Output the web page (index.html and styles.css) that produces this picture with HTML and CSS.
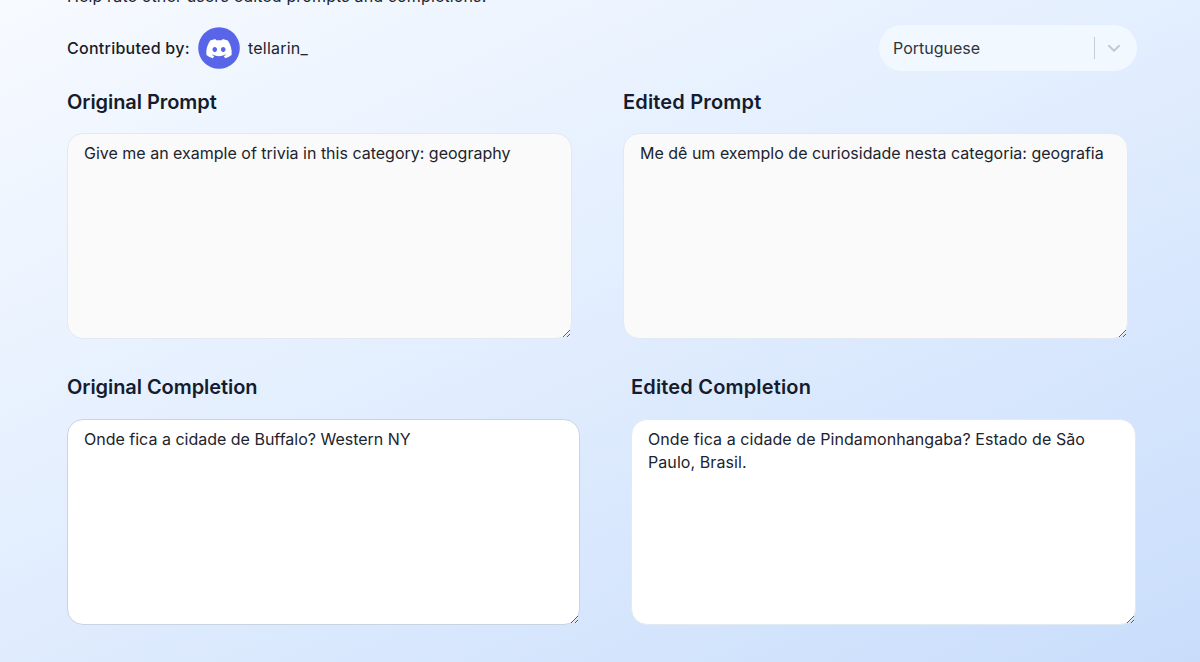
FILE: index.html
```
<!DOCTYPE html>
<html lang="en">
<head>
<meta charset="utf-8">
<title>Rate edited prompts</title>
<link rel="stylesheet" href="styles.css">
</head>
<body>
<main class="page">
  <p class="intro">Help rate other users edited prompts and completions.</p>
  <header class="toolbar">
    <div class="contributor">
      <span class="label">Contributed by:</span>
      <svg class="avatar" viewBox="0 0 42 42" aria-label="Discord">
        <circle cx="21" cy="21" r="20.8" fill="#5865e8"/>
        <g transform="translate(8.3 12) scale(.2)">
          <path fill="#fff" d="M107.7 8.07A105.15 105.15 0 0 0 81.47 0a72.06 72.06 0 0 0-3.36 6.83 97.68 97.68 0 0 0-29.11 0A72.37 72.37 0 0 0 45.64 0a105.89 105.89 0 0 0-26.25 8.09C2.79 32.65-1.71 56.6.54 80.21a105.73 105.73 0 0 0 32.17 16.15 77.7 77.7 0 0 0 6.89-11.11 68.42 68.42 0 0 1-10.85-5.18c.91-.66 1.8-1.34 2.66-2a75.57 75.57 0 0 0 64.32 0c.87.71 1.76 1.39 2.66 2a68.68 68.68 0 0 1-10.87 5.19 77 77 0 0 0 6.89 11.1 105.25 105.25 0 0 0 32.19-16.14c2.64-27.38-4.51-51.11-18.9-72.15ZM42.45 65.69C36.18 65.69 31 60 31 53s5-12.74 11.43-12.74S54 46 53.89 53s-5.05 12.69-11.44 12.69Zm42.24 0C78.41 65.69 73.25 60 73.25 53s5-12.74 11.44-12.74S96.23 46 96.12 53s-5.04 12.69-11.43 12.69Z"/>
        </g>
      </svg>
      <span class="username">tellarin_</span>
    </div>
    <div class="select">
      <span class="select-value">Portuguese</span>
      <span class="select-divider"></span>
      <svg class="chevron" viewBox="0 0 20 20"><path d="M4.9 7.8 10 12.7l5.1-4.9" fill="none" stroke="#c3c8ce" stroke-width="1.9" stroke-linecap="round" stroke-linejoin="round"/></svg>
    </div>
  </header>
  <section class="row prompts">
    <div class="field">
      <h2>Original Prompt</h2>
      <textarea class="box muted" spellcheck="false" readonly>Give me an example of trivia in this category: geography</textarea>
    </div>
    <div class="field edited">
      <h2>Edited Prompt</h2>
      <textarea class="box muted" spellcheck="false" readonly>Me dê um exemplo de curiosidade nesta categoria: geografia</textarea>
    </div>
  </section>
  <section class="row completions">
    <div class="field">
      <h2>Original Completion</h2>
      <textarea class="box outlined" spellcheck="false">Onde fica a cidade de Buffalo? Western NY</textarea>
    </div>
    <div class="field edited">
      <h2>Edited Completion</h2>
      <textarea class="box" spellcheck="false">Onde fica a cidade de Pindamonhangaba? Estado de São Paulo, Brasil.</textarea>
    </div>
  </section>
</main>
</body>
</html>
```
FILE: styles.css
```
* { box-sizing: border-box; }
body {
  margin: 0;
  height: 662px;
  overflow: hidden;
  font: 400 16px/23px Inter, sans-serif;
  color: #20242e;
  background: linear-gradient(155deg, #f7faff 0%, #e1edfe 50%, #c9ddfb 100%);
}
.page { padding: 0 63px 0 67px; }
.intro { margin: -15px 0 0; height: 40px; white-space: nowrap; letter-spacing: .14px; }
.toolbar { display: flex; justify-content: space-between; height: 46px; }
.contributor { display: flex; align-items: center; white-space: nowrap; }
.label { width: 131px; font-weight: 500; letter-spacing: .26px; color: #181c26; }
.avatar { width: 42px; height: 42px; margin-right: 8px; }
.username { letter-spacing: .22px; }
.select {
  display: flex;
  align-items: center;
  width: 258px;
  height: 46px;
  padding: 0 13px 0 14px;
  border-radius: 23px;
  background: #f1f8ff;
}
.select-value { flex: 1; color: #30343a; }
.select-divider { width: 1px; height: 22px; background: #c6cdd5; margin-right: 9px; }
.chevron { width: 20px; height: 20px; }
.row { display: grid; }
.prompts { grid-template-columns: 505px 505px; gap: 51px; padding-top: 18px; }
.completions { grid-template-columns: 513px 505px; gap: 51px; padding-top: 35px; }
.field { display: flex; flex-direction: column; }
h2 {
  margin: 0 0 17px;
  font-size: 20px;
  line-height: 27px;
  font-weight: 600;
  letter-spacing: -.06px;
  color: #141c2e;
  white-space: nowrap;
}
.completions h2 { margin-bottom: 18px; }
.edited h2 { letter-spacing: .17px; }
.box {
  display: block;
  width: 100%;
  height: 206px;
  margin: 0;
  padding: 8px 16px;
  border: 1px solid #e3e9f1;
  border-radius: 16px;
  background: #fff;
  color: #20242e;
  font: inherit;
  outline: none;
  resize: both;
}
.completions .edited .box { letter-spacing: .08px; }
.muted { background: #fafafa; }
.outlined { border-color: #c9d3e1; }
```
